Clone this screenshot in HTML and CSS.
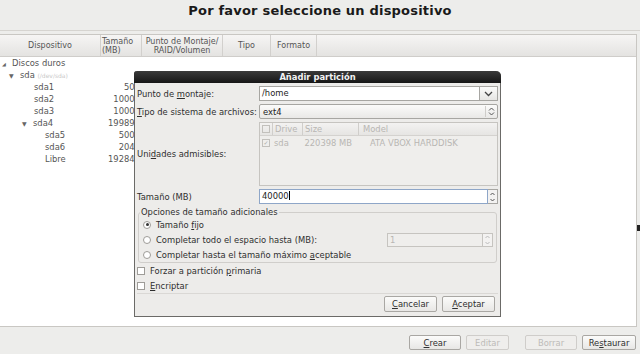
FILE: index.html
```html
<!DOCTYPE html>
<html lang="es">
<head>
    <meta charset="UTF-8">
    <title>Por favor seleccione un dispositivo</title>
    <link rel="stylesheet" href="styles.css">
</head>
<body>
    <div class="header">Por favor seleccione un dispositivo</div>

    <div class="list">
        <div class="colhead">
            <div class="col c-dev">Dispositivo</div>
            <div class="col c-size">Tamaño<br>(MB)</div>
            <div class="col c-mount">Punto de Montaje/<br>RAID/Volumen</div>
            <div class="col c-type">Tipo</div>
            <div class="col c-fmt">Formato</div>
            <div class="col c-rest"></div>
        </div>
        <div class="row"><span class="name lvl0"><span class="arrow small">&#9698;</span>Discos duros</span></div>
        <div class="row"><span class="name lvl1"><span class="arrow">&#9660;</span>sda <span class="dim">(/dev/sda)</span></span></div>
        <div class="row"><span class="name lvl2">sda1</span><span class="size">500</span></div>
        <div class="row"><span class="name lvl2">sda2</span><span class="size">10000</span></div>
        <div class="row"><span class="name lvl2">sda3</span><span class="size">10000</span></div>
        <div class="row"><span class="name lvl2b"><span class="arrow">&#9660;</span>sda4</span><span class="size">199897</span></div>
        <div class="row"><span class="name lvl3">sda5</span><span class="size">5000</span></div>
        <div class="row"><span class="name lvl3">sda6</span><span class="size">2046</span></div>
        <div class="row"><span class="name lvl3">Libre</span><span class="size">192848</span></div>
    </div>
    <div class="cursor-mark"></div>

    <div class="footer">
        <button class="btn crear"><u>C</u>rear</button>
        <button class="btn off editar">Editar</button>
        <button class="btn off borrar">Borrar</button>
        <button class="btn wide">Re<u>s</u>taurar</button>
    </div>

    <!-- Diálogo: Añadir partición -->
    <div class="dialog">
        <div class="dlg-title">Añadir partición</div>
        <div class="dlg-body">
            <div class="frow">
                <label>Punto de <u>m</u>ontaje:</label>
                <div class="combo">
                    <span class="entry">/home</span>
                    <span class="drop"><svg width="9" height="6" viewBox="0 0 9 6"><path d="M1 1 L4.5 4.5 L8 1" fill="none" stroke="#444" stroke-width="1.3"/></svg></span>
                </div>
            </div>
            <div class="frow">
                <label><u>T</u>ipo de sistema de archivos:</label>
                <div class="select">
                    <span class="sel-text">ext4</span>
                    <span class="updown"><svg width="7" height="9" viewBox="0 0 7 9"><path d="M1 3.5 L3.5 1 L6 3.5 M1 5.5 L3.5 8 L6 5.5" fill="none" stroke="#555" stroke-width="1"/></svg></span>
                </div>
            </div>
            <div class="frow tall">
                <label>Uni<u>d</u>ades admisibles:</label>
                <div class="drives">
                    <div class="dh">
                        <span class="d-chk"><i class="box"></i></span>
                        <span class="d-drv">Drive</span>
                        <span class="d-size">Size</span>
                        <span class="d-model">Model</span>
                    </div>
                    <div class="dr">
                        <span class="d-chk"><i class="box on">&#10003;</i></span>
                        <span class="d-drv">sda</span>
                        <span class="d-size num">220398 MB</span>
                        <span class="d-model">ATA VBOX HARDDISK</span>
                    </div>
                </div>
            </div>
            <div class="frow">
                <label>Tamaño (MB)</label>
                <div class="spin focus">
                    <span class="entry">40000<span class="caret"></span></span>
                    <span class="arrows">
                        <svg width="7" height="6" viewBox="0 0 7 6"><path d="M1.5 4 L3.5 2 L5.5 4" fill="none" stroke="#555" stroke-width="1"/></svg>
                        <svg width="7" height="6" viewBox="0 0 7 6"><path d="M1.5 2 L3.5 4 L5.5 2" fill="none" stroke="#555" stroke-width="1"/></svg>
                    </span>
                </div>
            </div>

            <fieldset class="opts">
                <legend>Opciones de tamaño adicionales</legend>
                <div class="orow"><i class="radio on"></i><span>Tamaño <u>f</u>ijo</span></div>
                <div class="orow">
                    <i class="radio"></i><span>Completar todo el espacio hasta (MB):</span>
                    <div class="spin off">
                        <span class="entry">1</span>
                        <span class="arrows">
                            <svg width="7" height="6" viewBox="0 0 7 6"><path d="M1.5 4 L3.5 2 L5.5 4" fill="none" stroke="#bbb" stroke-width="1"/></svg>
                            <svg width="7" height="6" viewBox="0 0 7 6"><path d="M1.5 2 L3.5 4 L5.5 2" fill="none" stroke="#bbb" stroke-width="1"/></svg>
                        </span>
                    </div>
                </div>
                <div class="orow"><i class="radio"></i><span>Completar hasta el tamaño máximo <u>a</u>ceptable</span></div>
            </fieldset>

            <div class="crow"><i class="check"></i><span>Forzar a partición <u>p</u>rimaria</span></div>
            <div class="crow"><i class="check"></i><span><u>E</u>ncriptar</span></div>

            <div class="dlg-actions">
                <button class="btn"><u>C</u>ancelar</button>
                <button class="btn"><u>A</u>ceptar</button>
            </div>
        </div>
    </div>
</body>
</html>
```

FILE: styles.css
```css
body {
    margin: 0;
    width: 640px;
    height: 354px;
    overflow: hidden;
    position: relative;
    font-family: "DejaVu Sans", sans-serif;
    font-size: 8.4px;
    color: #3a3a3a;
    background-color: #ededeb;
}
u {
    text-decoration: underline;
}
.header {
    height: 31px;
    box-sizing: border-box;
    padding-top: 3px;
    text-align: center;
    font-size: 13px;
    font-weight: bold;
    color: #1a1a1a;
    border-bottom: 1px solid #d6d4d0;
    letter-spacing: 0.2px;
}
.list {
    margin-top: 3px;
    margin-right: 3px;
    height: 293px;
    background-color: #ffffff;
    border: 1px solid #c9c7c3;
    border-left: none;
    box-sizing: border-box;
}
.colhead {
    display: flex;
    height: 22px;
    background: linear-gradient(#f6f5f4, #e4e3e1);
    border-bottom: 1px solid #cfcdca;
    box-sizing: border-box;
}
.col {
    display: flex;
    align-items: center;
    justify-content: center;
    text-align: center;
    line-height: 9px;
    border-right: 1px solid #d2d0cd;
    color: #555;
    font-size: 8px;
}
.c-dev { width: 100px; }
.c-size { width: 39px; justify-content: flex-start; text-align: left; padding-left: 1px; }
.c-mount { width: 80px; }
.c-type { width: 47px; }
.c-fmt { width: 45px; }
.c-rest { flex: 1; border-right: none; }
.row {
    display: flex;
    height: 12px;
    line-height: 12px;
    color: #555;
}
.name {
    width: 100px;
    flex-shrink: 0;
    box-sizing: border-box;
    white-space: nowrap;
}
.lvl0 { padding-left: 2px; }
.lvl1 { padding-left: 9px; }
.lvl2 { padding-left: 34px; }
.lvl2b { padding-left: 22px; }
.lvl3 { padding-left: 45px; }
.arrow {
    display: inline-block;
    width: 11px;
    font-size: 6px;
    color: #666;
}
.arrow.small {
    width: 10px;
    font-size: 5px;
}
.dim {
    color: #c8c8c8;
    font-size: 6px;
}
.size {
    width: 40px;
    flex-shrink: 0;
    text-align: right;
}
.cursor-mark {
    position: absolute;
    left: 637px;
    top: 225px;
    width: 3px;
    height: 6px;
    background: #222;
}
.footer {
    display: flex;
    justify-content: flex-end;
    gap: 5px;
    padding: 8px 4px 0 0;
}
.btn {
    width: 52px;
    height: 15px;
    padding: 0;
    font-family: "DejaVu Sans", sans-serif;
    font-size: 8.4px;
    color: #2e2e2e;
    background: linear-gradient(#fbfbfa, #e8e7e5);
    border: 1px solid #a9a7a3;
    border-radius: 2px;
}
.btn.off {
    color: #bdbbb8;
    border-color: #cfcdca;
    background: #efeeec;
}
.btn.editar { width: 43px; }
.btn.borrar { margin-left: 11px; }
.btn.wide { width: 54px; }

/* диалог */
.dialog {
    position: absolute;
    left: 134px;
    top: 71px;
    width: 367px;
    height: 246px;
    box-sizing: border-box;
    border: 1px solid #6b6a67;
    border-top: none;
    border-radius: 3px 5px 0 0;
    background-color: #edecea;
}
.dlg-title {
    height: 12px;
    line-height: 13px;
    text-align: center;
    font-weight: bold;
    color: #f2f2f2;
    background: linear-gradient(#3a3a3a, #161616);
    border-radius: 3px 5px 0 0;
    margin: 0 -1px;
}
.dlg-body {
    padding: 3px 2px 0 2px;
}
.frow {
    display: flex;
    align-items: center;
    height: 15px;
    margin-bottom: 3px;
}
.frow.tall {
    height: 64px;
}
.frow label {
    width: 122px;
    flex-shrink: 0;
    color: #2e2e2e;
    white-space: nowrap;
}
.combo, .select, .spin {
    display: flex;
    height: 15px;
    box-sizing: border-box;
    width: 239px;
}
.combo .entry, .spin .entry {
    flex: 1;
    background: #fff;
    border: 1px solid #a7a6a2;
    padding-left: 2px;
    line-height: 13px;
    color: #222;
}
.drop {
    width: 17px;
    display: flex;
    align-items: center;
    justify-content: center;
    border: 1px solid #a7a6a2;
    border-left: none;
    background: linear-gradient(#fbfbfa, #e6e5e3);
}
.select {
    border: 1px solid #a7a6a2;
    border-radius: 2px;
    background: linear-gradient(#fbfbfa, #e9e8e6);
    align-items: center;
}
.sel-text {
    flex: 1;
    padding-left: 3px;
    color: #222;
}
.updown {
    width: 11px;
    height: 11px;
    display: flex;
    align-items: center;
    justify-content: center;
    border-left: 1px solid #cfcdca;
}
.drives {
    width: 239px;
    height: 64px;
    box-sizing: border-box;
    border: 1px solid #c6c4c0;
    background: #efeeec;
    color: #b8b6b3;
    white-space: nowrap;
}
.dh, .dr {
    display: flex;
    align-items: center;
    height: 12px;
}
.dh {
    border-bottom: 1px solid #d4d2cf;
    background: linear-gradient(#f3f2f1, #e6e5e3);
}
.dh span {
    border-right: 1px solid #d0cecb;
    height: 12px;
    line-height: 12px;
}
.dh .d-model { border-right: none; }
.dr { height: 14px; }
.d-chk { width: 12px; flex-shrink: 0; display: flex; align-items: center; justify-content: center; }
.d-drv { width: 30px; flex-shrink: 0; padding-left: 2px; box-sizing: border-box; }
.d-size { width: 56px; flex-shrink: 0; padding-left: 2px; box-sizing: border-box; }
.d-size.num { text-align: right; padding-right: 6px; }
.d-model { flex: 1; padding-left: 4px; }
.dr .d-model { padding-left: 12px; }
.box {
    display: inline-block;
    width: 6px;
    height: 6px;
    border: 1px solid #c2c0bc;
    font-style: normal;
    font-size: 6px;
    line-height: 6px;
    text-align: center;
    color: #aaa;
}
.spin.focus .entry {
    border-color: #8ea6c8;
}
.caret {
    display: inline-block;
    width: 1px;
    height: 9px;
    background: #000;
    vertical-align: -1px;
}
.arrows {
    width: 9px;
    display: flex;
    flex-direction: column;
    align-items: center;
    justify-content: center;
    border: 1px solid #a7a6a2;
    border-left: none;
    background: #f3f2f1;
}
.opts {
    margin: 0 1px 0 1px;
    padding: 0 4px 0 4px;
    border: 1px solid #d0cecb;
    border-radius: 3px;
    color: #2e2e2e;
}
.opts legend {
    padding: 0 1px;
    margin-left: -3px;
}
.orow {
    display: flex;
    align-items: center;
    height: 15px;
    white-space: nowrap;
}
.radio {
    display: inline-block;
    flex-shrink: 0;
    width: 6px;
    height: 6px;
    border: 1px solid #9e9c98;
    border-radius: 50%;
    background: #fff;
    margin-right: 5px;
    position: relative;
}
.radio.on::after {
    content: "";
    position: absolute;
    left: 1.5px;
    top: 1.5px;
    width: 3px;
    height: 3px;
    border-radius: 50%;
    background: #333;
}
.spin.off {
    width: 106px;
    height: 14px;
    margin-left: auto;
    margin-right: -1px;
}
.spin.off .entry {
    background: #efeeec;
    border-color: #c6c4c0;
    color: #b8b6b3;
}
.spin.off .arrows {
    border-color: #c6c4c0;
}
.crow {
    display: flex;
    align-items: center;
    height: 15px;
    color: #2e2e2e;
}
.check {
    display: inline-block;
    flex-shrink: 0;
    width: 6px;
    height: 6px;
    border: 1px solid #9e9c98;
    background: #fff;
    margin-right: 5px;
}
.dlg-actions {
    display: flex;
    justify-content: flex-end;
    gap: 5px;
    border-top: 1px solid #dad8d5;
    padding: 2px 3px 0 0;
}
.dlg-actions .btn {
    width: 53px;
    height: 16px;
}
```
